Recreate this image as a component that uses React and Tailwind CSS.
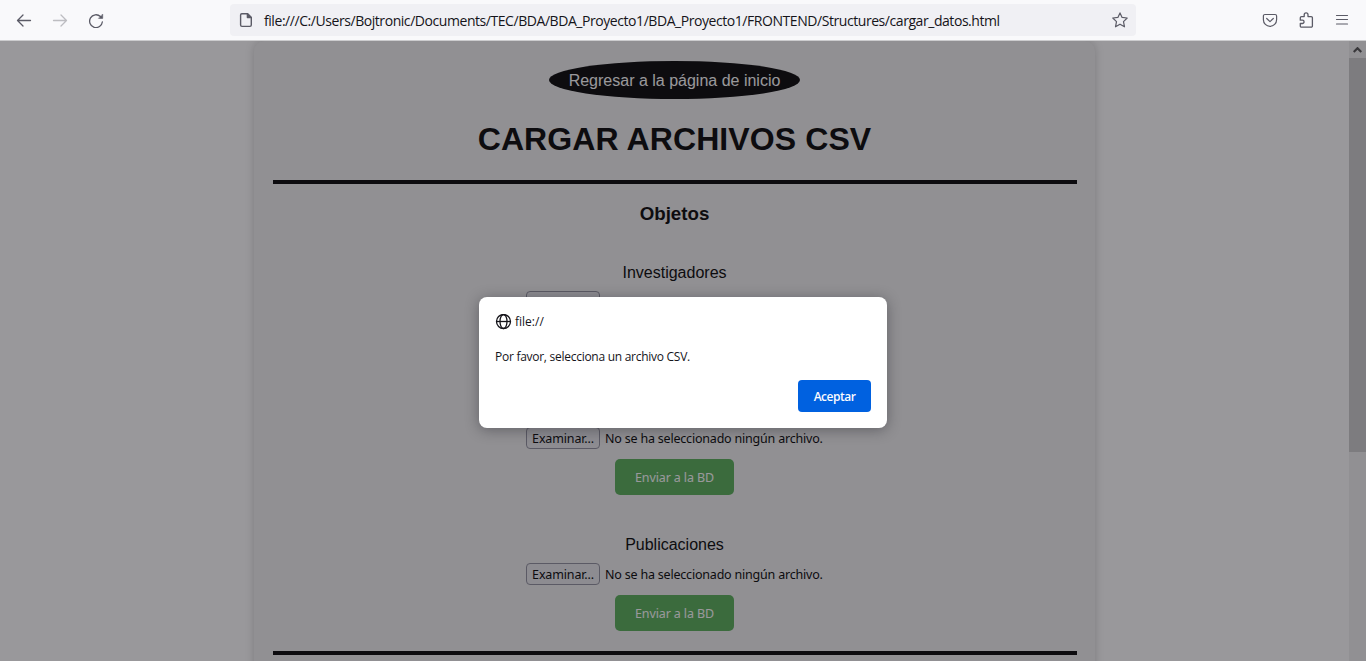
import React from "react";

function Toolbar() {
  return (
    <header className="flex h-[41px] shrink-0 items-start border-b border-[#ccccce] bg-[#f9f9fb] font-['Open_Sans','Noto_Sans',sans-serif] text-[#5b5b66]">
      <div className="flex h-10 w-[230px] items-center pl-4">
        <svg width="16" height="16" viewBox="0 0 16 16" fill="none" stroke="currentColor" strokeWidth="1.3" strokeLinecap="round" strokeLinejoin="round">
          <path d="M14.5 8.5H1.5M7 3L1.5 8.5L7 14" />
        </svg>
        <svg className="ml-5 text-[#bdbdc1]" width="16" height="16" viewBox="0 0 16 16" fill="none" stroke="currentColor" strokeWidth="1.3" strokeLinecap="round" strokeLinejoin="round">
          <path d="M1.5 8.5H14.5M9 3L14.5 8.5L9 14" />
        </svg>
        <svg className="ml-5" width="16" height="16" viewBox="0 0 16 16" fill="none" stroke="currentColor" strokeWidth="1.3" strokeLinecap="round">
          <path d="M12.4 4.5A6.4 6.4 0 1 0 14.4 9.8" />
          <path d="M14.7 2.4V6.4H10.8Z" fill="currentColor" strokeWidth="0.6" strokeLinejoin="round" />
        </svg>
      </div>
      <div className="mt-1 flex h-8 w-[906px] items-center rounded bg-[#f0f0f4] pl-2 pr-2">
        <svg width="16" height="16" viewBox="0 0 16 16" fill="none" stroke="currentColor" strokeWidth="1.4" strokeLinejoin="round">
          <path d="M3.8 1.7H9.6L13.3 5.4V13a1.4 1.4 0 0 1-1.4 1.4H4A1.4 1.4 0 0 1 2.6 13V3A1.3 1.3 0 0 1 3.8 1.7Z" />
          <path d="M9.4 1.8V5.6H13.2Z" fill="currentColor" />
        </svg>
        <span className="ml-[10px] whitespace-nowrap pt-0.5 text-sm leading-8 tracking-[-0.44px] text-[#15141a]">
          file:///C:/Users/Bojtronic/Documents/TEC/BDA/BDA_Proyecto1/BDA_Proyecto1/FRONTEND/Structures/cargar_datos.html
        </span>
        <svg className="ml-auto" width="16" height="16" viewBox="0 0 16 16" fill="none" stroke="currentColor" strokeWidth="1.2" strokeLinejoin="round">
          <path d="M8 .9L10.1 5.4L15.2 6L11.5 9.6L12.5 14.8L8 12.2L3.5 14.8L4.5 9.6L.8 6L5.9 5.4Z" />
        </svg>
      </div>
      <div className="flex h-10 flex-1 items-center justify-end gap-5 pr-4">
        <svg width="16" height="16" viewBox="0 0 16 16" fill="none" stroke="currentColor" strokeWidth="1.2" strokeLinecap="round" strokeLinejoin="round">
          <path d="M2.9 2.5H13.1A1.5 1.5 0 0 1 14.6 4V7.7A6.6 6.6 0 0 1 1.4 7.7V4A1.5 1.5 0 0 1 2.9 2.5Z" />
          <path d="M4.7 6.5L8 9.6L11.3 6.5" />
        </svg>
        <svg width="16" height="16" viewBox="0 0 16 16" fill="none" stroke="currentColor" strokeWidth="1.3" strokeLinejoin="round">
          <path d="M6.2 4.6V2.7a1.9 1.9 0 0 1 3.8 0V4.6H13.2a1.2 1.2 0 0 1 1.2 1.2V14a1.2 1.2 0 0 1-1.2 1.2H3.5A1.2 1.2 0 0 1 2.3 14V11.5H4.4a1.6 1.6 0 0 0 0-3.3H2.3V5.8A1.2 1.2 0 0 1 3.5 4.6Z" />
        </svg>
        <svg width="16" height="16" viewBox="0 0 16 16" fill="none" stroke="currentColor" strokeWidth="1.2" strokeLinecap="round">
          <path d="M2.5 3.5H13.5M2.5 7.5H13.5M2.5 12H13.5" />
        </svg>
      </div>
    </header>
  );
}

function UploadForm({ title }) {
  return (
    <section className="flex h-[136px] shrink-0 flex-col items-center">
      <h3 className="mt-[30px] text-base leading-[18px] text-black">{title}</h3>
      <div className="mt-[9px] flex h-[22px] w-[297px] items-center font-['Noto_Sans',sans-serif] text-black">
        <button className="flex h-[22px] w-[74px] shrink-0 items-center justify-center rounded border border-[#8f8f9d] bg-[#e9e9ed] pt-0.5 text-[12.5px] tracking-[-0.15px]">
          Examinar...
        </button>
        <span className="ml-[5px] whitespace-nowrap pt-0.5 text-[12.5px] tracking-[-0.2px]">No se ha seleccionado ningún archivo.</span>
      </div>
      <button className="mt-[10px] h-9 w-[119px] rounded-[5px] bg-[#54ae55] pt-0.5 font-['Noto_Sans',sans-serif] text-[12.5px] tracking-[-0.12px] text-white">
        Enviar a la BD
      </button>
    </section>
  );
}

function Alert() {
  return (
    <div className="absolute left-[479px] top-[256px] flex h-[131px] w-[408px] flex-col rounded-lg bg-white px-4 font-['Open_Sans','Noto_Sans',sans-serif] text-[#15141a] shadow-[0_2px_14px_rgba(28,27,34,0.4)]">
      <div className="mt-4 flex h-[18px] items-center">
        <svg width="17" height="16" viewBox="0 0 17 16" fill="none" stroke="currentColor" strokeWidth="1.3">
          <circle cx="8.5" cy="7.5" r="7" />
          <ellipse cx="8.5" cy="7.5" rx="3.5" ry="7" />
          <path d="M1.5 7.5H15.5" />
        </svg>
        <span className="ml-[3px] text-xs font-medium">file://</span>
      </div>
      <p className="mt-[17px] h-[18px] whitespace-nowrap text-xs leading-[18px] tracking-[-0.27px]">Por favor, selecciona un archivo CSV.</p>
      <button className="mt-[14px] h-8 w-[73px] self-end rounded bg-[#0061e0] pt-0.5 text-xs font-semibold tracking-[-0.5px] text-[#fbfbfe]">Aceptar</button>
    </div>
  );
}

export default function App() {
  return (
    <div className="flex h-[661px] w-[1366px] flex-col overflow-hidden">
      <Toolbar />
      <div className="relative flex h-[620px] overflow-hidden bg-white font-['Liberation_Sans',Arial,sans-serif]">
        <main className="flex flex-1 justify-center">
          <div className="flex h-[900px] w-[841px] shrink-0 flex-col rounded-[10px] bg-[#f0f0f0] px-[18.5px] pt-5 shadow-[0_0_10px_rgba(0,0,0,0.2)]">
            <a className="flex h-[38px] w-[251px] shrink-0 items-center justify-center self-center rounded-[50%] bg-black pt-0.5 text-base text-white">
              Regresar a la página de inicio
            </a>
            <h1 className="mt-[22px] shrink-0 text-center text-[32px] font-bold leading-9 tracking-[0.1px] text-black">CARGAR ARCHIVOS CSV</h1>
            <hr className="mt-[23px] h-1 shrink-0 border-0 bg-black" />
            <h2 className="mb-[9px] mt-[19px] shrink-0 text-center text-[18.72px] font-bold leading-[22px] text-black">Objetos</h2>
            <UploadForm title="Investigadores" />
            <UploadForm title="Proyectos" />
            <UploadForm title="Publicaciones" />
            <hr className="mt-[9px] h-1 shrink-0 border-0 bg-black" />
          </div>
        </main>
        <div className="flex w-[17px] flex-col bg-[#f0f0f0]">
          <div className="flex h-[17px] items-center justify-center">
            <svg width="9" height="6" viewBox="0 0 9 6" fill="none" stroke="#505050" strokeWidth="2.2">
              <path d="M.7 5L4.5 1.2L8.3 5" />
            </svg>
          </div>
          <div className="h-[394px] bg-[#cdcdcd]" />
        </div>
        <div className="absolute inset-0 bg-[rgba(28,27,34,0.45)]" />
        <Alert />
      </div>
    </div>
  );
}
